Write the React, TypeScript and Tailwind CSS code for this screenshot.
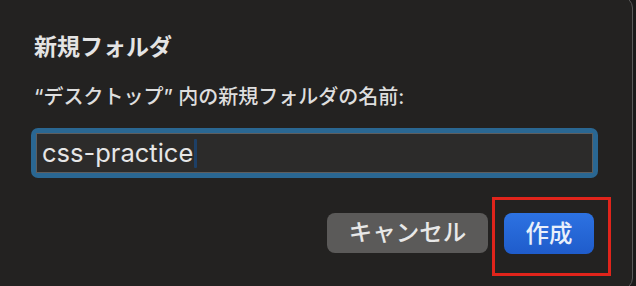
import React from 'react';

export default function App(): JSX.Element {
  return (
    <div
      className="relative w-[636px] h-[286px] overflow-hidden bg-[#1b1b1b] font-['Inter','Noto_Sans_CJK_JP',sans-serif]"
    >
      <div className="mt-[-4px] ml-[-20px] w-[653px] h-[294px] rounded-[12px] border border-[#5a5a5a] bg-[#232221] pl-[50px] pt-[37px]">
        <div className="pl-[3px] text-[23px] leading-[26px] font-bold text-[#e4e4e4]">
          新規フォルダ
        </div>
        <div className="mt-[25px] pl-[3px] text-[20px] leading-[24px] font-medium text-[#dedede]">
          “デスクトップ” 内の新規フォルダの名前:
        </div>
        <div className="mt-[19px] w-[567px] h-[50px] rounded-[7px] bg-[#2a6792] p-[5px]">
          <div className="flex h-full items-center border border-[#5e5e5e] bg-[#2c2b2a] pl-[5px]">
            <span className="text-[25.5px] leading-none text-[#e6e6e6]">css-practice</span>
            <span className="ml-[1px] h-[29px] w-[3px] rounded-[1px] bg-[#1d3f66]" />
          </div>
        </div>
        <div className="mt-[35px] flex justify-end gap-[16px] pr-[38px]">
          <button className="h-[40px] w-[161px] rounded-[8px] bg-[#5b5a59] text-[23.5px] font-medium text-[#e8e8e8]">
            キャンセル
          </button>
          <button className="h-[41px] w-[90px] rounded-[8px] bg-gradient-to-b from-[#2d72e2] to-[#1f5ccb] text-[23.5px] font-medium text-[#e9effa]">
            作成
          </button>
        </div>
      </div>
      <div className="absolute left-[492px] top-[197px] h-[79px] w-[119px] border-[3px] border-[#e0241b]" />
    </div>
  );
}
